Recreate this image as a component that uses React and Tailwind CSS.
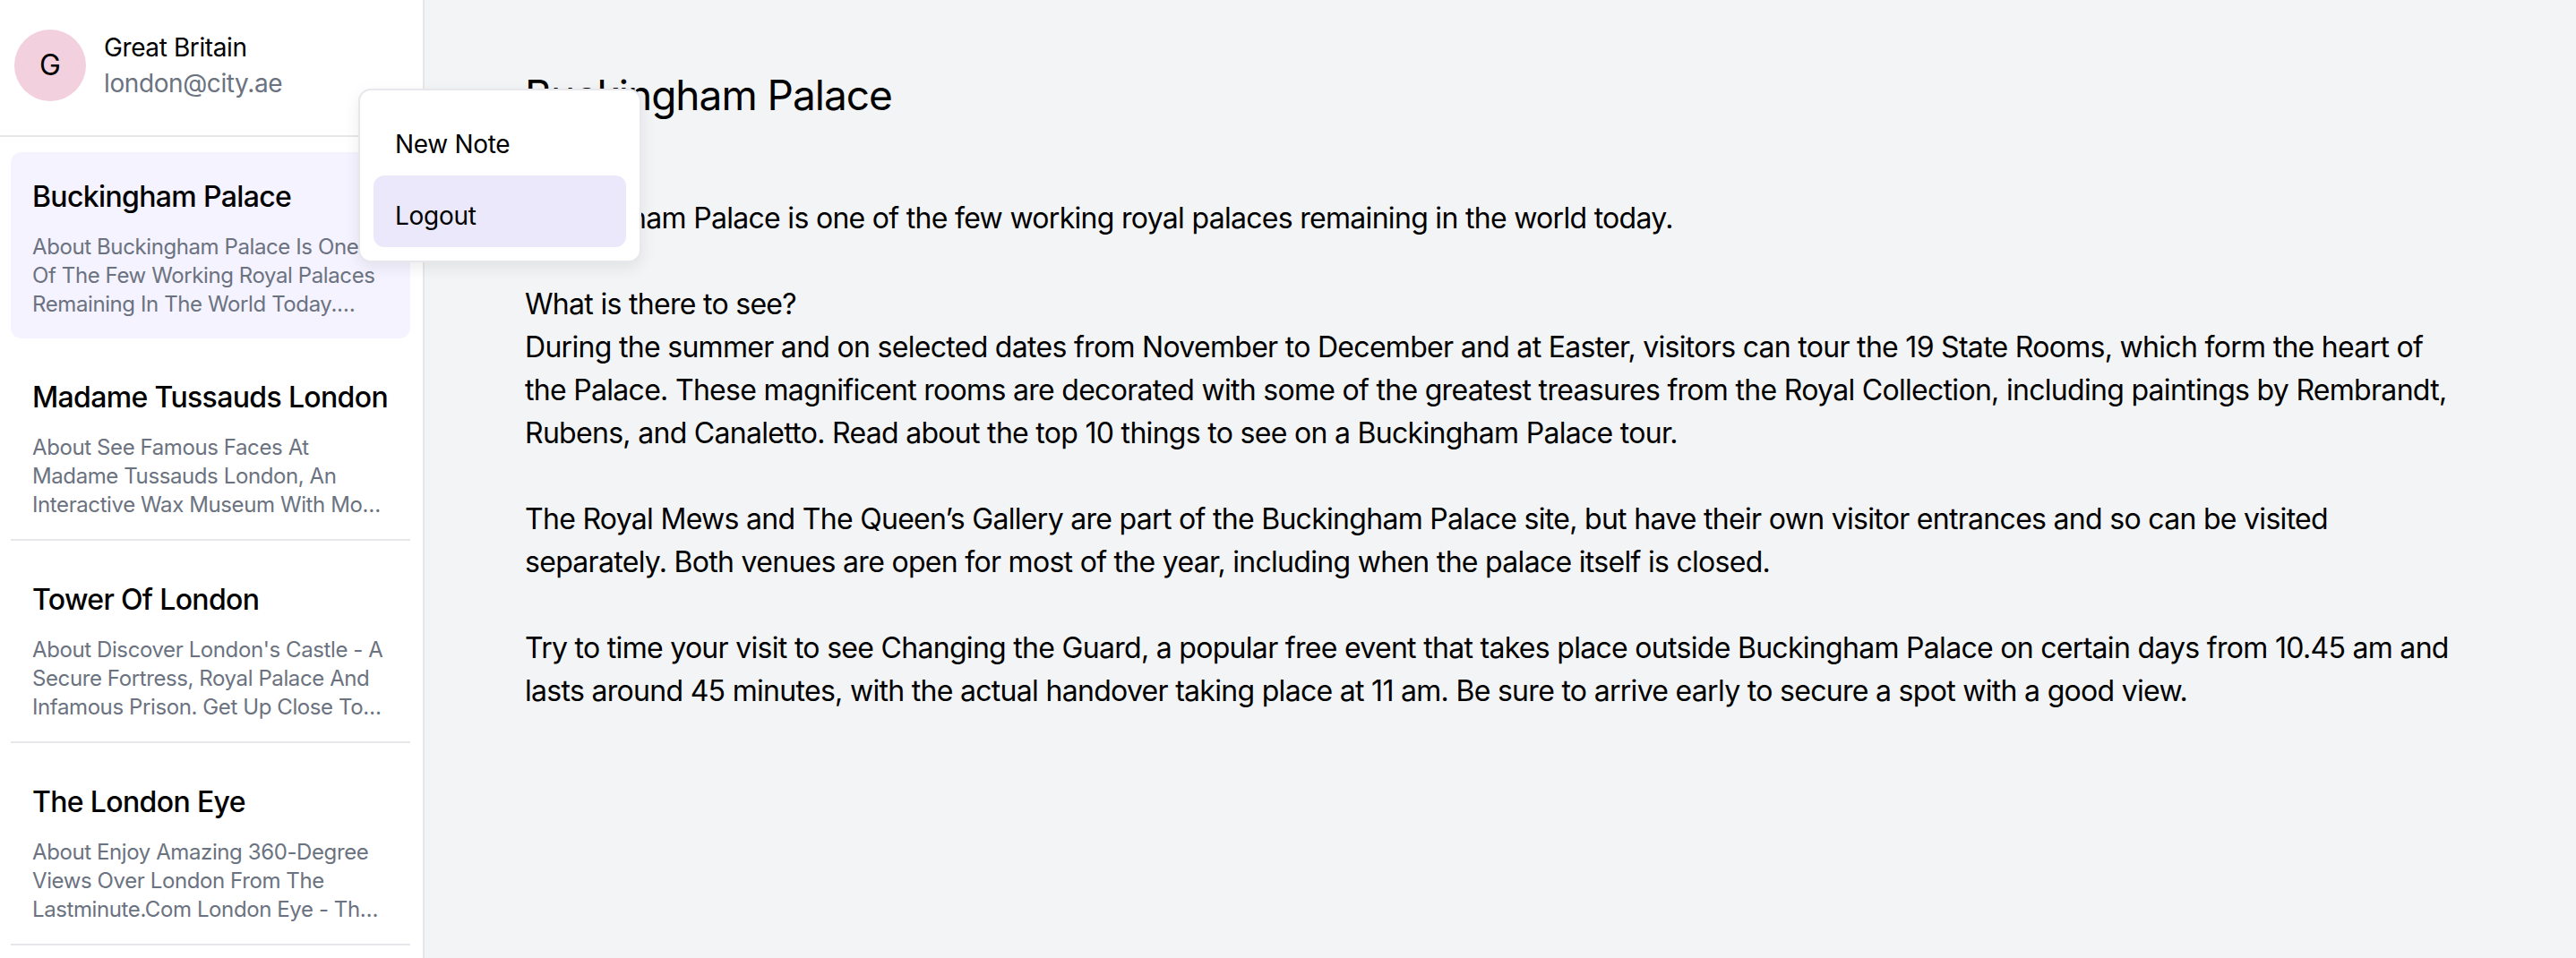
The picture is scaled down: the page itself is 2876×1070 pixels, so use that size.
import React from "react";

const notes = [
  {
    title: "Buckingham Palace",
    lines: ["About Buckingham Palace Is One", "Of The Few Working Royal Palaces", "Remaining In The World Today.…"],
    selected: true,
  },
  {
    title: "Madame Tussauds London",
    lines: ["About See Famous Faces At", "Madame Tussauds London, An", "Interactive Wax Museum With Mo…"],
  },
  {
    title: "Tower Of London",
    lines: ["About Discover London's Castle - A", "Secure Fortress, Royal Palace And", "Infamous Prison. Get Up Close To…"],
  },
  {
    title: "The London Eye",
    lines: ["About Enjoy Amazing 360-Degree", "Views Over London From The", "Lastminute.Com London Eye - Th…"],
  },
];

const paragraphs = [
  ["Buckingham Palace is one of the few working royal palaces remaining in the world today."],
  [
    "What is there to see?",
    "During the summer and on selected dates from November to December and at Easter, visitors can tour the 19 State Rooms, which form the heart of",
    "the Palace. These magnificent rooms are decorated with some of the greatest treasures from the Royal Collection, including paintings by Rembrandt,",
    "Rubens, and Canaletto. Read about the top 10 things to see on a Buckingham Palace tour.",
  ],
  [
    "The Royal Mews and The Queen’s Gallery are part of the Buckingham Palace site, but have their own visitor entrances and so can be visited",
    "separately. Both venues are open for most of the year, including when the palace itself is closed.",
  ],
  [
    "Try to time your visit to see Changing the Guard, a popular free event that takes place outside Buckingham Palace on certain days from 10.45 am and",
    "lasts around 45 minutes, with the actual handover taking place at 11 am. Be sure to arrive early to secure a spot with a good view.",
  ],
];

export default function App() {
  return (
    <div className="relative flex h-[1070px] w-full overflow-hidden font-['Inter','Noto_Sans',sans-serif] text-black">
      <aside className="flex w-[474px] shrink-0 flex-col border-r-2 border-[#e5e7eb] bg-white">
        <div className="flex h-[153px] shrink-0 items-start gap-[20px] border-b-2 border-[#e5e7eb] pl-[16px] pt-[33px]">
          <div className="flex h-[80px] w-[80px] shrink-0 items-center justify-center rounded-full bg-[#f2d0dd] text-[32px] leading-none text-black">
            G
          </div>
          <div className="flex flex-col tracking-[-0.4px]">
            <span className="text-[28px] leading-[40px] text-black">Great Britain</span>
            <span className="text-[28px] leading-[40px] text-[#6b7280]">london@city.ae</span>
          </div>
        </div>
        <div className="flex flex-col gap-[16px] pl-[12px] pr-[14px] pt-[17px]">
          {notes.map((n) => (
            <div
              key={n.title}
              className={
                n.selected
                  ? "rounded-[12px] bg-[#f5f3ff] px-[24px] pb-[22px] pt-[26px]"
                  : "border-b-2 border-[#e5e7eb] px-[24px] pb-[22px] pt-[26px]"
              }
            >
              <div className="whitespace-nowrap text-[32px] font-medium leading-[48px] tracking-[-0.65px] text-black">{n.title}</div>
              <div className="mt-[16px] text-[24px] leading-[32px] tracking-[-0.4px] text-[#6b7280]">
                {n.lines.map((l) => (
                  <div key={l} className="whitespace-nowrap">{l}</div>
                ))}
              </div>
            </div>
          ))}
        </div>
      </aside>

      <main className="min-w-0 flex-1 bg-[#f3f4f6] pl-[112px] pr-[112px] pt-[74px]">
        <h1 className="whitespace-nowrap text-[46px] font-normal leading-[64px] tracking-[-1px] text-black">Buckingham Palace</h1>
        <div className="mt-[82px] flex flex-col gap-[48px] text-[32px] leading-[48px] tracking-[-0.7px] text-black">
          {paragraphs.map((p, i) => (
            <div key={i}>
              {p.map((l) => (
                <div key={l} className="whitespace-nowrap">{l}</div>
              ))}
            </div>
          ))}
        </div>
      </main>

      <div className="absolute left-[400px] top-[99px] w-[316px] rounded-[14px] border-2 border-[#e7e7ec] bg-white p-[15px] shadow-[0_6px_18px_rgba(0,0,0,0.08)]">
        <div className="rounded-[12px] px-[24px] pb-[15px] pt-[25px] text-[28px] leading-[40px] tracking-[-0.3px] text-black">New Note</div>
        <div className="rounded-[12px] bg-[#ebe8fb] px-[24px] pb-[15px] pt-[25px] text-[28px] leading-[40px] tracking-[-0.3px] text-black">Logout</div>
      </div>
    </div>
  );
}
